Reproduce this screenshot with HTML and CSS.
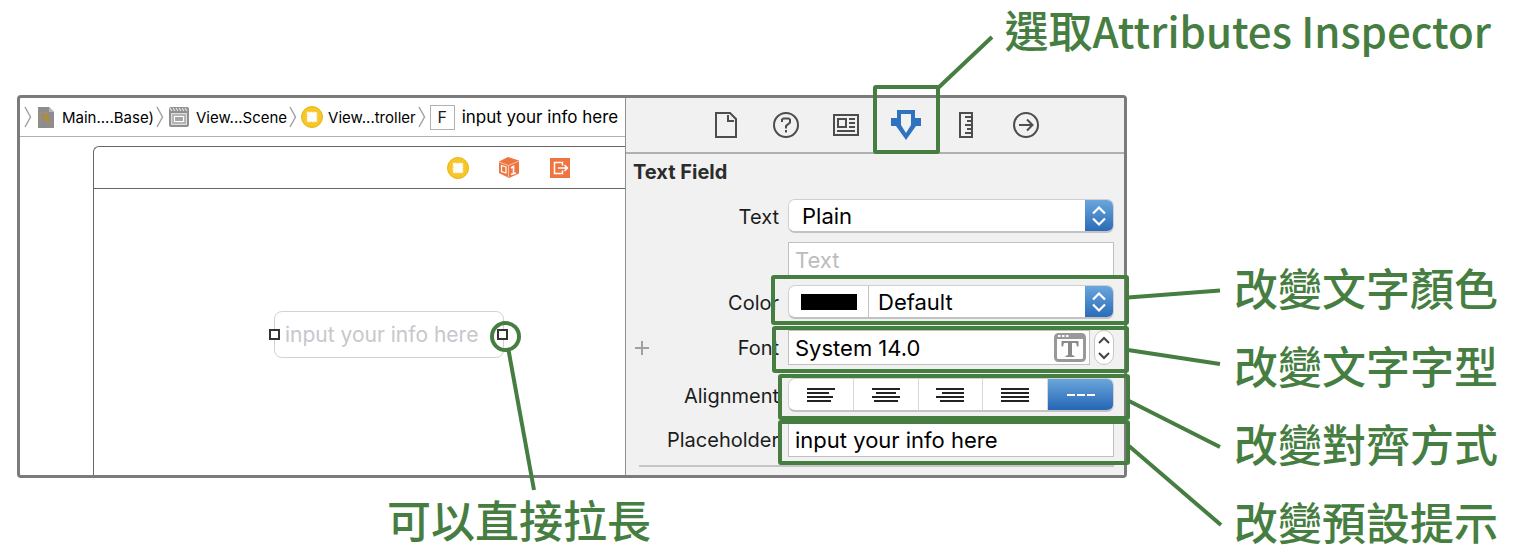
FILE: index.html
```html
<!DOCTYPE html>
<html lang="zh-Hant">
<head>
<meta charset="utf-8">
<title>Attributes Inspector</title>
<link rel="stylesheet" href="styles.css">
</head>
<body>
<svg class="symbols" aria-hidden="true">
  <symbol id="chevron" viewBox="0 0 8 22"><path d="M1 1 6.500 11 1 21" fill="none" stroke="#a3a3a3" stroke-width="1.500"/></symbol>
  <symbol id="controller" viewBox="0 0 22 22"><circle cx="11" cy="11" r="10.500" fill="#f6c727" stroke="#e6b414"/><rect x="6.500" y="6.500" width="9" height="9" fill="#fff" stroke="#fff" stroke-width="1.500" stroke-dasharray="1 .8"/></symbol>
  <symbol id="updown" viewBox="0 0 14 22"><path d="M1 8.500 7 2.500l6 6M1 13.500 7 19.500l6-6" fill="none" stroke="currentColor" stroke-width="2.200"/></symbol>
</svg>
<main class="figure">
  <h1 class="heading">選取<span class="latin">Attributes Inspector</span></h1>
  <section class="window">
    <div class="editor">
      <nav class="jumpbar">
        <svg class="sep" aria-hidden="true"><use href="#chevron"/></svg>
        <svg class="crumb-icon doc" viewBox="0 0 16 21" aria-hidden="true"><path d="M0 0h11l5 5v16H0z" fill="#8d8d8d"/><path d="M11 0v5h5" fill="#b5b5b5"/><circle cx="8.500" cy="10.500" r="2.800" fill="#b98a2b"/><path d="M2 5.500h6.500v10H13M8.500 5.500v5M2 5.500v11M11.500 13.500l2 2-2 2" fill="none" stroke="#b0904a"/></svg>
        <a class="crumb" href="#">Main....Base)</a>
        <svg class="sep" aria-hidden="true"><use href="#chevron"/></svg>
        <svg class="crumb-icon clap" viewBox="0 0 20 20" aria-hidden="true"><rect width="20" height="20" rx="2" fill="#8f8f8f"/><path d="M1 1l2 3M4 1l2 3M7 1l2 3M10 1l2 3M13 1l2 3M16 1l2 3" stroke="#e8e8e8" stroke-width="1.200"/><rect x="2.500" y="6.500" width="15" height="11" fill="#b5b5b5" stroke="#ddd"/><rect x="5.500" y="9.500" width="9" height="5" fill="#a5a5a5" stroke="#fff"/></svg>
        <a class="crumb" href="#">View...Scene</a>
        <svg class="sep" aria-hidden="true"><use href="#chevron"/></svg>
        <svg class="controller" aria-hidden="true"><use href="#controller"/></svg>
        <a class="crumb" href="#">View...troller</a>
        <svg class="sep" aria-hidden="true"><use href="#chevron"/></svg>
        <span class="f-icon">F</span>
        <a class="crumb current" href="#">input your info here</a>
      </nav>
      <div class="canvas">
        <div class="scene">
          <div class="dock">
            <svg class="controller" aria-hidden="true"><use href="#controller"/></svg>
            <svg class="responder" viewBox="0 0 20 21" aria-hidden="true"><path d="M9 0l11 3.500v13L10 21 0 16V4.500z" fill="#ee7440"/><path d="M0 5l9.500 3.500L20 4M9.500 8.500V20" fill="none" stroke="#f9c3a8"/><path d="M2.500 8.500l4.500 1.500v6l-4.500-1.500z" fill="none" stroke="#fff" stroke-width="1.200"/><path d="M12 11l2.500-1.500V17M12 17.500l5-1.500" fill="none" stroke="#fff" stroke-width="1.600"/></svg>
            <svg class="exit" viewBox="0 0 20 20" aria-hidden="true"><path d="M0 0h20v20H0z" fill="#ee7440"/><path d="M12.500 7.500v-3h-8v11h8v-3M8 10h9M14.500 7l3 3-3 3" fill="none" stroke="#fff" stroke-width="1.500"/></svg>
          </div>
          <div class="stage">
            <div class="field">
              <input class="design-input" type="text" placeholder="input your info here" aria-label="Text field on canvas">
              <span class="handle start"></span>
              <span class="handle end"></span>
            </div>
          </div>
        </div>
      </div>
    </div>
    <aside class="inspector">
      <div class="tabs">
        <button class="tab" aria-label="File inspector"><svg width="22" height="26" viewBox="0 0 22 26"><path d="M1 1h14l6 6v18H1zM13 3v6h6" /></svg></button>
        <button class="tab" aria-label="Quick help"><svg width="26" height="26" viewBox="0 0 26 26"><circle cx="13" cy="13" r="12"/><path d="M9 10V7.500l1.500-1h5L17 7.500v3L13 14v2.500M13 18v2.500"/></svg></button>
        <button class="tab" aria-label="Identity inspector"><svg width="26" height="22" viewBox="0 0 26 22"><path d="M1 1h24v20H1zM5 5h8v8H5zM16 5h6M16 9h6M16 13h6M4 17h18"/></svg></button>
        <button class="tab active" aria-label="Attributes inspector"><svg width="30" height="30" viewBox="0 0 30 30"><path d="M0 8h6V0h18v8h6v8h-5L15 30 5 16H0z" fill="#2f73c0" stroke="none"/><path d="M10 4h10v11l-5 8-5-8z" fill="#f1f1f1" stroke="none"/></svg></button>
        <button class="tab" aria-label="Size inspector"><svg width="14" height="26" viewBox="0 0 14 26"><path d="M1 1h12v24H1zM6 5h7M8 9h5M6 13h7M8 17h5M6 21h7"/></svg></button>
        <button class="tab" aria-label="Connections inspector"><svg width="26" height="26" viewBox="0 0 26 26"><circle cx="13" cy="13" r="12"/><path d="M6 13h13M14 7.500l5.500 5.500-5.500 5.500"/></svg></button>
      </div>
      <h2 class="title">Text Field</h2>
      <form class="form">
        <label class="label" for="kind">Text</label>
        <div class="popup">
          <select class="select" id="kind"><option>Plain</option></select>
          <svg class="arrows" aria-hidden="true"><use href="#updown" x="7" y="5" width="14" height="22"/></svg>
        </div>

        <input class="input content" type="text" placeholder="Text" aria-label="Text content">

        <label class="label" for="color">Color</label>
        <div class="popup">
          <span class="well"><span class="swatch"></span></span>
          <select class="select" id="color"><option>Default</option></select>
          <svg class="arrows" aria-hidden="true"><use href="#updown" x="7" y="5" width="14" height="22"/></svg>
        </div>

        <button class="add" type="button" aria-label="Add font variation"><svg width="14" height="14"><path d="M7 0v14M0 7h14" stroke="#a0a0a0" stroke-width="2"/></svg></button>
        <label class="label" for="font">Font</label>
        <div class="font-row">
          <div class="font-field">
            <input class="input" id="font" type="text" value="System 14.0">
            <button class="font-button" type="button" aria-label="Choose font"><svg width="32" height="29" viewBox="0 0 32 29"><rect x="1.500" y="1.500" width="29" height="26" rx="3" fill="#fff" stroke="#999" stroke-width="3"/><path d="M1 1h30v5H1z" fill="#999"/><path d="M4 3h2.500M8 3h2.500M12 3h2.500" stroke="#fff" stroke-width="2"/><path d="M7.500 8h17v5.500h-1.500l-1-3.500h-4v12l2.500 1v1h-9v-1l2.500-1V10h-4L9 13.500H7.500z" fill="#8a8a8a"/></svg></button>
          </div>
          <button class="stepper" type="button" aria-label="Step font size"><svg width="12" height="24" viewBox="0 0 12 24"><path d="M1 7l5-5 5 5M1 17l5 5 5-5" fill="none" stroke="#444" stroke-width="2"/></svg></button>
        </div>

        <span class="label" id="align-label">Alignment</span>
        <div class="segments" role="group" aria-labelledby="align-label">
          <button class="segment" type="button" aria-label="Left"><svg width="28" height="16"><path d="M0 2h28M0 6h22M0 10h26M0 14h24"/></svg></button>
          <button class="segment" type="button" aria-label="Center"><svg width="28" height="16"><path d="M0 2h28M4 6h20M0 10h28M2 14h24"/></svg></button>
          <button class="segment" type="button" aria-label="Right"><svg width="28" height="16"><path d="M0 2h28M6 6h22M0 10h28M4 14h24"/></svg></button>
          <button class="segment" type="button" aria-label="Justified"><svg width="28" height="16"><path d="M0 2h28M0 6h28M0 10h28M0 14h28"/></svg></button>
          <button class="segment on" type="button" aria-label="Natural"><svg width="28" height="16"><path d="M0 8h8M10 8h8M20 8h8"/></svg></button>
        </div>

        <label class="label" for="placeholder">Placeholder</label>
        <input class="input" id="placeholder" type="text" value="input your info here">
      </form>
      <hr class="rule">
    </aside>
  </section>
  <ul class="notes">
    <li>改變文字顏色</li>
    <li>改變文字字型</li>
    <li>改變對齊方式</li>
    <li>改變預設提示</li>
  </ul>
  <p class="caption">可以直接拉長</p>
  <svg class="marks marks-left" viewBox="0 0 620 558" aria-hidden="true">
    <circle cx="505.500" cy="336.500" r="13.500"/>
    <path d="M508.500 350 534 490"/>
  </svg>
  <svg class="marks marks-right" viewBox="620 0 900 558" aria-hidden="true">
    <rect x="875" y="87" width="63" height="65" rx="1"/>
    <rect x="773" y="277" width="354" height="46" rx="1"/>
    <rect x="774" y="328" width="353" height="43" rx="1"/>
    <rect x="780" y="376" width="348" height="42" rx="1"/>
    <rect x="780" y="422" width="348" height="41" rx="1"/>
    <path d="M937 89 992 37M1128 297.500 1220 290.500M1128 350 1220 364M1129 401 1220 447M1129 446 1221 525"/>
  </svg>
</main>
</body>
</html>
```
FILE: styles.css
```css
* { box-sizing: border-box; }

body {
  margin: 0;
  background: #fff;
  color: #1c1c1c;
  font-family: Inter, "Noto Sans CJK TC", sans-serif;
  font-size: 20px;
}

button, input, select { font: inherit; color: inherit; margin: 0; }
button { padding: 0; border: 0; background: none; }

.symbols { position: absolute; width: 0; height: 0; }

.figure {
  position: relative;
  display: grid;
  grid-template-columns: minmax(1110px, 1fr) 286px;
  grid-template-rows: 95px auto 80px;
  column-gap: 107px;
  padding-left: 17px;
}

.heading, .notes, .caption {
  margin: 0;
  color: #467e42;
  font-family: "Noto Sans CJK TC", sans-serif;
  font-size: 44px;
  font-weight: 500;
}

.heading {
  grid-column: 1 / -1;
  padding-right: 29px;
  line-height: 58px;
  text-align: right;
  white-space: nowrap;
}

.latin { font-size: 42px; }

.window {
  display: grid;
  grid-template-columns: 1fr 499px;
  border: 3px solid #7b7b7b;
  border-radius: 4px;
}

.editor {
  display: flex;
  flex-direction: column;
  min-width: 0;
}

.jumpbar {
  display: flex;
  align-items: center;
  height: 39px;
  padding-left: 4px;
  border-bottom: 1px solid #b0b0b0;
  font-size: 15px;
  white-space: nowrap;
}

.sep { flex: none; width: 8px; height: 22px; }
.crumb { color: #000; text-decoration: none; }
.crumb + .sep { margin-left: 2px; }
.crumb-icon { flex: none; margin: 0 8px 0 6px; }
.doc { width: 16px; height: 21px; }
.clap { width: 20px; height: 20px; margin: 0 7px 0 5px; }
.controller { flex: none; width: 22px; height: 22px; }
.jumpbar .controller { margin: 0 5px 0 4px; }
.current { font-size: 17px; }

.f-icon {
  flex: none;
  width: 25px;
  height: 25px;
  margin: 0 7px 0 4px;
  border: 1px solid #b0b0b0;
  font-size: 16px;
  line-height: 23px;
  text-align: center;
}

.canvas {
  display: flex;
  flex: 1;
  padding: 9px 0 0 73px;
}

.scene {
  flex: 1;
  border: solid #666;
  border-width: 1px 0 0 1px;
  border-top-left-radius: 6px;
}

.dock {
  display: flex;
  align-items: center;
  gap: 30px;
  height: 42px;
  padding-left: 353px;
  border-bottom: 1px solid #666;
}

.responder { width: 20px; height: 21px; }
.exit { width: 20px; height: 20px; margin-left: 1px; }

.stage { padding: 122px 0 0 180px; }
.field { position: relative; width: 230px; }

.design-input {
  display: block;
  width: 100%;
  height: 47px;
  padding: 0 10px;
  border: 1px solid #d2d2d2;
  border-radius: 8px;
  background: #fff;
  font-size: 21px;
}

.design-input::placeholder { color: #c7c7cc; opacity: 1; }

.handle {
  position: absolute;
  top: 18px;
  width: 11px;
  height: 11px;
  border: 2px solid #333;
  background: #fff;
}

.handle.start { left: -5px; }
.handle.end { right: -4px; }

.inspector {
  border-left: 1px solid #909090;
  background: #f1f1f1;
}

.tabs {
  display: flex;
  justify-content: center;
  height: 56px;
  padding-left: 2px;
  border-bottom: 2px solid #b0b0b0;
}

.tab {
  display: flex;
  align-items: center;
  justify-content: center;
  width: 60px;
}

.tab svg { fill: none; stroke: #4d4d4d; stroke-width: 2; }

.title {
  margin: 0;
  padding: 0 7px;
  font-size: 20px;
  font-weight: 700;
  line-height: 36px;
  color: #2c2c2c;
}

.form {
  display: grid;
  grid-template-columns: 14px 121px 326px;
  grid-template-rows: 43px 43px 45px 48px 44px 35px;
  align-items: start;
  justify-content: end;
  column-gap: 9px;
  padding: 9px 10px 0 0;
}

.label {
  grid-column: 2;
  line-height: 36px;
  text-align: right;
}

.popup, .font-row, .segments, .form > .input { grid-column: 3; }

.popup {
  display: flex;
  height: 34px;
  overflow: hidden;
  border: 1px solid #cfcfcf;
  border-bottom: 2px solid #c2c2c2;
  border-radius: 7px;
  background: #fff;
}

.select {
  flex: 1;
  min-width: 0;
  padding: 0 13px;
  border: 0;
  background: #fff;
  color: #000;
  font-size: 22px;
  appearance: none;
}

.well {
  display: grid;
  place-items: center;
  width: 80px;
  border-right: 1px solid #c2c2c2;
}

.well + .select { padding: 0 9px; }
.swatch { width: 56px; height: 16px; background: #000; }

.arrows {
  flex: none;
  width: 28px;
  height: 34px;
  background: linear-gradient(#6aa6dc, #2566b5);
  color: #fff;
}

.input {
  display: block;
  width: 100%;
  height: 35px;
  padding: 1px 6px 0;
  border: 1px solid #c0c0c0;
  background: #fff;
  color: #000;
  font-size: 22px;
}

.content::placeholder { color: #bcbcbc; opacity: 1; }

.add {
  grid-column: 1;
  display: flex;
  align-items: center;
  height: 35px;
}

.font-row { display: flex; gap: 4px; height: 35px; }
.font-field { position: relative; flex: 1; }

.font-button {
  position: absolute;
  top: 3px;
  right: 4px;
  display: flex;
}

.stepper {
  display: grid;
  place-items: center;
  width: 20px;
  border: 1px solid #c6c6c6;
  border-radius: 10px;
  background: #fff;
}

.segments {
  display: grid;
  grid-template-columns: repeat(5, 1fr);
  height: 34px;
  overflow: hidden;
  border: 1px solid #cfcfcf;
  border-bottom: 2px solid #c2c2c2;
  border-radius: 7px;
  background: #fff;
}

.segment {
  display: grid;
  place-items: center;
  border-right: 1px solid #d8d8d8;
}

.segment svg { stroke: #222; stroke-width: 2; }
.segment.on { border: 0; background: linear-gradient(#6aa6dc, #2566b5); }
.segment.on svg { stroke: #fff; }

.rule {
  height: 2px;
  margin: 8px 10px 8px 13px;
  border: 0;
  background: #c6c6c6;
}

.notes {
  align-self: start;
  height: 0;
  padding: 153px 0 0;
  line-height: 78px;
  list-style: none;
  white-space: nowrap;
}

.caption {
  padding-left: 370px;
  line-height: 82px;
}

.marks {
  position: absolute;
  top: 0;
  height: 558px;
  fill: none;
  stroke: #467e42;
  stroke-width: 4;
  pointer-events: none;
}

.marks-left { left: 0; width: 620px; }
.marks-right { right: 0; width: 900px; }
```
